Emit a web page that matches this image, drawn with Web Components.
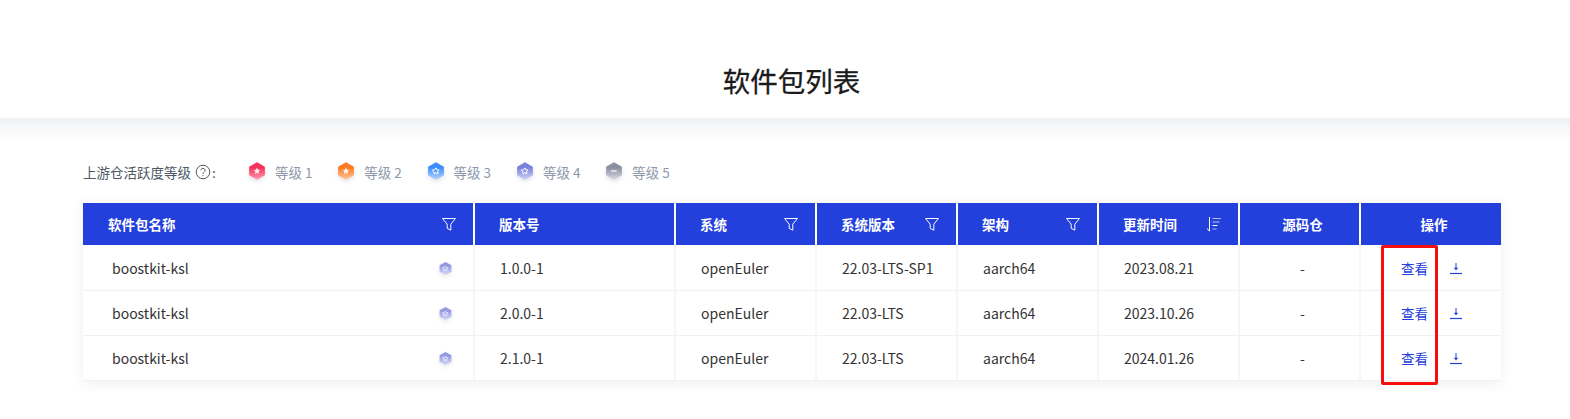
<!DOCTYPE html>
<html lang="zh">
<head>
<meta charset="utf-8">
<title>软件包列表</title>
<style>
  html { overflow: hidden; height: 100%; }
  body { margin: 0; min-height: 100%; background: #fff; font-family: "Noto Sans CJK SC", "Noto Sans", sans-serif; color: #1a1a1a; }
</style>
</head>
<body>
<pkg-banner>软件包列表</pkg-banner>
<pkg-section>
  <level-legend></level-legend>
  <pkg-table></pkg-table>
</pkg-section>

<script>
// colours for the five levels: [top of gradient, bottom of gradient]
const LEVELS = {
  1: ['#f6325a', '#ff9db0'],
  2: ['#fb7a22', '#ffc89b'],
  3: ['#3f8cff', '#b4d6ff'],
  4: ['#7a82dc', '#cfd2f4'],
  5: ['#8b8f9f', '#d8dae2'],
};

class LevelIcon extends HTMLElement {
  connectedCallback() {
    const level = this.getAttribute('level') || 1;
    const [a, b] = LEVELS[level];
    const id = 'g' + level;
    let mark = '<path d="M10 6.6l1 2.1 2.3.3-1.7 1.6.4 2.3-2-1.1-2 1.1.4-2.3L6.7 9l2.3-.3z" fill="#fff" fill-opacity=".9"/>';
    if (level == 3 || level == 4) mark = '<path d="M10 6.9l.95 1.95 2.15.3-1.55 1.5.36 2.13L10 11.8l-1.91 1-.36-2.15-1.55-1.5 2.15-.3z" fill="none" stroke="#fff" stroke-width="1"/>';
    if (level == 5) mark = '<path d="M7.2 10h5.6" stroke="#fff" stroke-width="1.3"/>';
    this.attachShadow({ mode: 'open' }).innerHTML = `
      <style>
        :host { display: inline-flex; width: var(--size, 20px); height: var(--size, 20px); flex: none; }
        svg { width: 100%; height: 100%; display: block; overflow: visible; filter: drop-shadow(0 2px 2px rgba(120,125,150,.22)); }
      </style>
      <svg viewBox="0 0 20 20">
        <defs><linearGradient id="${id}" x1="0" y1="0" x2="0" y2="1">
          <stop offset="0.3" stop-color="${a}"/><stop offset="1" stop-color="${b}"/>
        </linearGradient></defs>
        <path d="M10 1.2l7.4 4.2a1 1 0 0 1 .5.9v7.4a1 1 0 0 1-.5.9L10 18.8l-7.4-4.2a1 1 0 0 1-.5-.9V6.3a1 1 0 0 1 .5-.9z" fill="url(#${id})"/>
        ${mark}
      </svg>`;
  }
}
customElements.define('level-icon', LevelIcon);

class PkgBanner extends HTMLElement {
  constructor() {
    super();
    this.attachShadow({ mode: 'open' }).innerHTML = `
      <style>
        :host {
          display: flex; height: 118px; box-sizing: border-box;
          padding-top: 59px; justify-content: center; align-items: flex-start;
          background: #fff; position: relative;
        }
        /* soft shade under the band, even from edge to edge */
        :host::after {
          content: ""; position: absolute; left: 0; right: 0; top: 100%; height: 24px;
          background: linear-gradient(#eef0f2, #f7f8f9 45%, #fff);
        }
        h1 { margin: 0 0 0 13px; font-size: 27.5px; line-height: 42px; font-weight: 400; color: #1a1a1a; -webkit-text-stroke: .3px #1a1a1a; }
      </style>
      <h1><slot></slot></h1>`;
  }
}
customElements.define('pkg-banner', PkgBanner);

class PkgSection extends HTMLElement {
  constructor() {
    super();
    this.attachShadow({ mode: 'open' }).innerHTML = `
      <style>
        :host { display: block; padding: 40px 69px 0 83px; }
      </style>
      <slot></slot>`;
  }
}
customElements.define('pkg-section', PkgSection);

class LevelLegend extends HTMLElement {
  constructor() {
    super();
    const items = [1, 2, 3, 4, 5].map(n => `
      <span class="item"><level-icon level="${n}"></level-icon><span class="name">等级 ${n}</span></span>`).join('');
    this.attachShadow({ mode: 'open' }).innerHTML = `
      <style>
        :host { display: flex; align-items: center; height: 27px; margin-bottom: 18px; font-size: 13.5px; color: #4e5865; }
        .label { display: inline-flex; align-items: center; width: 164px; flex: none; line-height: 20px; }
        .label svg { width: 16px; height: 16px; flex: none; margin: 0 1px 0 4px; }
        .item { display: inline-flex; align-items: center; gap: 8px; width: 89.3px; flex: none; color: #8d98aa; }
        .item level-icon { margin-top: -2px; }
        .name { line-height: 20px; white-space: nowrap; }
      </style>
      <span class="label">上游仓活跃度等级
        <svg viewBox="0 0 16 16" fill="none" stroke="#555b66" stroke-width="1">
          <circle cx="8" cy="8" r="6.8"/>
          <path d="M5.9 6.4a2.1 2.1 0 1 1 3.2 1.8c-.7.4-1.1.8-1.1 1.6"/>
          <circle cx="8" cy="11.6" r=".6" fill="#555b66" stroke="none"/>
        </svg>:</span>
      ${items}`;
  }
}
customElements.define('level-legend', LevelLegend);

const FILTER = `<svg class="ic" viewBox="0 0 16 16" fill="none" stroke="#fff" stroke-width="1"><path d="M1.5 2.5h13L9.8 8.2v6L6.2 12.4V8.2z"/></svg>`;
const SORT = `<svg class="ic" viewBox="0 0 16 16" fill="none" stroke="#fff" stroke-width="1"><path d="M3.5 1v14M1 12.6L3.5 15"/><path d="M6.5 2.5h8.5" opacity=".65"/><path d="M6.5 6h7" opacity=".7"/><path d="M6.5 9.5h5"/><path d="M6.5 13h4" opacity=".6"/></svg>`;

class PkgTable extends HTMLElement {
  constructor() {
    super();
    const heads = [
      ['软件包名称', FILTER, 'first'], ['版本号', ''], ['系统', FILTER], ['系统版本', FILTER],
      ['架构', FILTER], ['更新时间', SORT], ['源码仓', '', 'c'], ['操作', '', 'c'],
    ];
    const rows = [
      ['1.0.0-1', '22.03-LTS-SP1', '2023.08.21'],
      ['2.0.0-1', '22.03-LTS', '2023.10.26'],
      ['2.1.0-1', '22.03-LTS', '2024.01.26'],
    ];
    const headHtml = heads.map(([t, ic, c]) => `<div class="th ${c || ''}"><span>${t}</span>${ic}</div>`).join('');
    const bodyHtml = rows.map(([ver, sys, date]) => `
      <div class="td name"><span>boostkit-ksl</span><level-icon level="4"></level-icon></div>
      <div class="td">${ver}</div>
      <div class="td">openEuler</div>
      <div class="td">${sys}</div>
      <div class="td">aarch64</div>
      <div class="td">${date}</div>
      <div class="td c">-</div>
      <div class="td ops"><a>查看</a>
        <svg viewBox="0 0 12 12" fill="none" stroke="#2340dc" stroke-width="1"><path d="M6 0v6"/><path d="M3.8 4.8L6 7.6l2.2-2.8z" fill="#2340dc" stroke="none"/><path d="M0 10.5h12" stroke-width="1.2"/></svg>
      </div>`).join('');
    this.attachShadow({ mode: 'open' }).innerHTML = `
      <style>
        :host { display: block; position: relative; width: 1418px; }
        .grid {
          display: grid;
          grid-template-columns: 392px 201px 141px 141px 141px 141px 121px 140px;
          grid-template-rows: 42px 46px 45px 45px;
          background: #fff;
          box-shadow: 0 2px 12px rgba(45,47,51,.08);
        }
        .th {
          background: #2340dc; color: #fff; font-size: 13.5px; font-weight: 700;
          display: flex; align-items: center; justify-content: space-between;
          padding: 0 16px 0 24px; border-right: 2px solid #fff; box-sizing: border-box;
        }
        .th:nth-child(8) { border-right: 0; }
        .th.first { padding-left: 25px; }
        .th.c { justify-content: center; padding: 0 0 0 6px; }
        .th .ic { width: 16px; height: 16px; flex: none; }
        .td {
          font-size: 14px; color: #333; display: flex; align-items: center; white-space: nowrap;
          padding: 0 25px; box-sizing: border-box;
          border-right: 2px solid #f5f6f8; border-bottom: 1px solid #f0f1f3;
        }
        .td:nth-child(8n+16) { border-right: 0; }
        .td.c { justify-content: center; padding-left: 6px; padding-right: 0; }
        .td.name { justify-content: space-between; padding: 0 20px 0 29px; --size: 15px; }
        .td.name level-icon { opacity: .8; margin-top: 1px; }
        .td.ops { padding: 0 0 0 40px; gap: 22px; }
        .ops a { color: #2340dc; font-size: 13.5px; }
        .ops svg { width: 12px; height: 12px; flex: none; margin-top: 2px; }
        .mark {
          position: absolute; left: 1298px; top: 42px; width: 57px; height: 140px; box-sizing: border-box;
          border: 3px solid #f60d0d; border-radius: 2px; pointer-events: none;
        }
      </style>
      <div class="grid">${headHtml}${bodyHtml}</div>
      <div class="mark"></div>`;
  }
}
customElements.define('pkg-table', PkgTable);
</script>
</body>
</html>
